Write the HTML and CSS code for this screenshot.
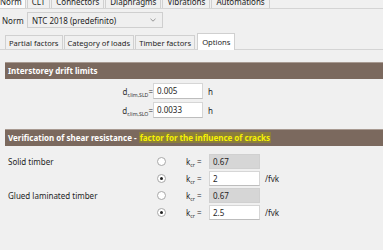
FILE: index.html
```html
<!DOCTYPE html>
<html>
<head>
<meta charset="utf-8">
<link rel="stylesheet" href="styles.css">
</head>
<body>
<div class="top-tabs">
  <div class="tab active">Norm</div>
  <div class="tab">CLT</div>
  <div class="tab">Connectors</div>
  <div class="tab">Diaphragms</div>
  <div class="tab">Vibrations</div>
  <div class="tab">Automations</div>
</div>
<div class="norm-row">
  <span class="norm-label">Norm</span>
  <div class="select">
    <span>NTC 2018 (predefinito)</span>
    <svg class="chev" width="6" height="4" viewBox="0 0 6 4"><path d="M0.5 0.8 L3 3.2 L5.5 0.8" fill="none" stroke="#8a8a8a" stroke-width="0.9"/></svg>
  </div>
</div>
<div class="sub-tabs">
  <div class="stab">Partial factors</div>
  <div class="stab">Category of loads</div>
  <div class="stab">Timber factors</div>
  <div class="stab active">Options</div>
</div>
<div class="panel">
  <div class="header">Interstorey drift limits</div>
  <div class="drift">
    <div class="drift-row">
      <span class="dlabel">d<sub>r,lim,SLD</sub>=</span>
      <div class="input">0.005</div>
      <span class="unit">h</span>
    </div>
    <div class="drift-row">
      <span class="dlabel">d<sub>r,lim,SLO</sub>=</span>
      <div class="input">0.0033</div>
      <span class="unit">h</span>
    </div>
  </div>
  <div class="header header2">Verification of shear resistance - <span class="hl">factor for the influence of cracks</span></div>
  <div class="shear">
    <div class="mat">Solid timber</div>
    <span class="radio"></span>
    <span class="klabel">k<sub>cr</sub> =</span>
    <div class="input disabled">0.67</div>
    <span></span>

    <div></div>
    <span class="radio checked"></span>
    <span class="klabel">k<sub>cr</sub> =</span>
    <div class="input">2</div>
    <span class="unit2">/fvk</span>

    <div class="mat">Glued laminated timber</div>
    <span class="radio"></span>
    <span class="klabel">k<sub>cr</sub> =</span>
    <div class="input disabled">0.67</div>
    <span></span>

    <div></div>
    <span class="radio checked"></span>
    <span class="klabel">k<sub>cr</sub> =</span>
    <div class="input">2.5</div>
    <span class="unit2">/fvk</span>
  </div>
</div>
</body>
</html>
```
FILE: styles.css
```css
html, body {
  margin: 0;
  padding: 0;
  background: #f0f0f0;
  font-family: "Noto Sans", "Open Sans", sans-serif;
  font-size: 8px;
  color: #1e1e1e;
  overflow: hidden;
  width: 383px;
  height: 250px;
}

.top-tabs {
  display: flex;
  margin-top: -8px;
  height: 16px;
  border-bottom: 1px solid #d4d4d4;
}
.tab {
  height: 16px;
  box-sizing: border-box;
  border: 1px solid #d0d0d0;
  border-bottom: none;
  padding: 0 4px;
  line-height: 18px;
  margin-right: 1px;
  background: #f0f0f0;
}
.tab.active {
  background: #fbfbfb;
  padding: 0 3px 0 3px;
  margin-left: -4px;
}

.norm-row {
  display: flex;
  align-items: center;
  margin-top: 3px;
  height: 16px;
  padding-left: 2px;
}
.norm-label {
  width: 25px;
}
.select {
  width: 136px;
  height: 16px;
  box-sizing: border-box;
  border: 1px solid #cfcfcf;
  background: #efefef;
  display: flex;
  align-items: center;
  justify-content: space-between;
  padding: 0 6px 0 4px;
}
.chev { display: block; }

.sub-tabs {
  display: flex;
  align-items: flex-end;
  margin-top: 5px;
  padding-left: 5px;
  height: 16px;
  border-bottom: 1px solid #d4d4d4;
  font-size: 7.6px;
}
.stab {
  height: 14px;
  box-sizing: border-box;
  border: 1px solid #d0d0d0;
  border-bottom: none;
  padding: 0 3px;
  line-height: 14px;
  margin-right: 1px;
}
.stab.active {
  background: #ffffff;
  line-height: 17px;
  margin-left: 1px;
  padding: 0 4px;
  margin-bottom: -1px;
  height: 17px;
}

.panel {
  padding-left: 5px;
}
.header {
  margin-top: 12px;
  height: 17px;
  background: #7b695e;
  border-top: 1px solid #a89a91;
  box-sizing: border-box;
  color: #ffffff;
  font-weight: bold;
  line-height: 16px;
  padding-left: 3px;
}
.header2 {
  margin-top: 11px;
}
.hl {
  color: #f7f200;
  background: #8c7f3a;
  padding: 0 1px;
}

sub {
  font-size: 5.2px;
  vertical-align: -2px;
  line-height: 0;
}

.drift {
  display: flex;
  flex-direction: column;
  gap: 3px;
  margin-top: 4px;
}
.drift-row {
  display: flex;
  align-items: center;
  height: 16px;
}
.dlabel {
  width: 148px;
  text-align: right;
  color: #333;
}
.input {
  width: 50px;
  height: 16px;
  box-sizing: border-box;
  background: #ffffff;
  border: 1px solid #d6d6d6;
  border-bottom-color: #bdbdbd;
  line-height: 14px;
  padding-left: 3px;
}
.input.disabled {
  background: #d6d6d6;
  border-color: #d0d0d0;
}
.unit {
  margin-left: 5px;
}

.shear {
  display: grid;
  grid-template-columns: 149px 10px 42px 51px auto;
  grid-template-rows: 16px 16px 16px 16px;
  row-gap: 1px;
  align-items: center;
  margin-top: 7px;
  padding-left: 3px;
}
.radio {
  width: 9px;
  height: 9px;
  box-sizing: border-box;
  border: 1px solid #a8a8a8;
  border-radius: 50%;
  background: #ffffff;
  position: relative;
}
.radio.checked::after {
  content: "";
  position: absolute;
  left: 2px;
  top: 2px;
  width: 3px;
  height: 3px;
  border-radius: 50%;
  background: #222;
}
.klabel {
  padding-left: 19px;
}
.shear .input {
  width: 51px;
  height: 15px;
}
.unit2 {
  padding-left: 5px;
}
```
